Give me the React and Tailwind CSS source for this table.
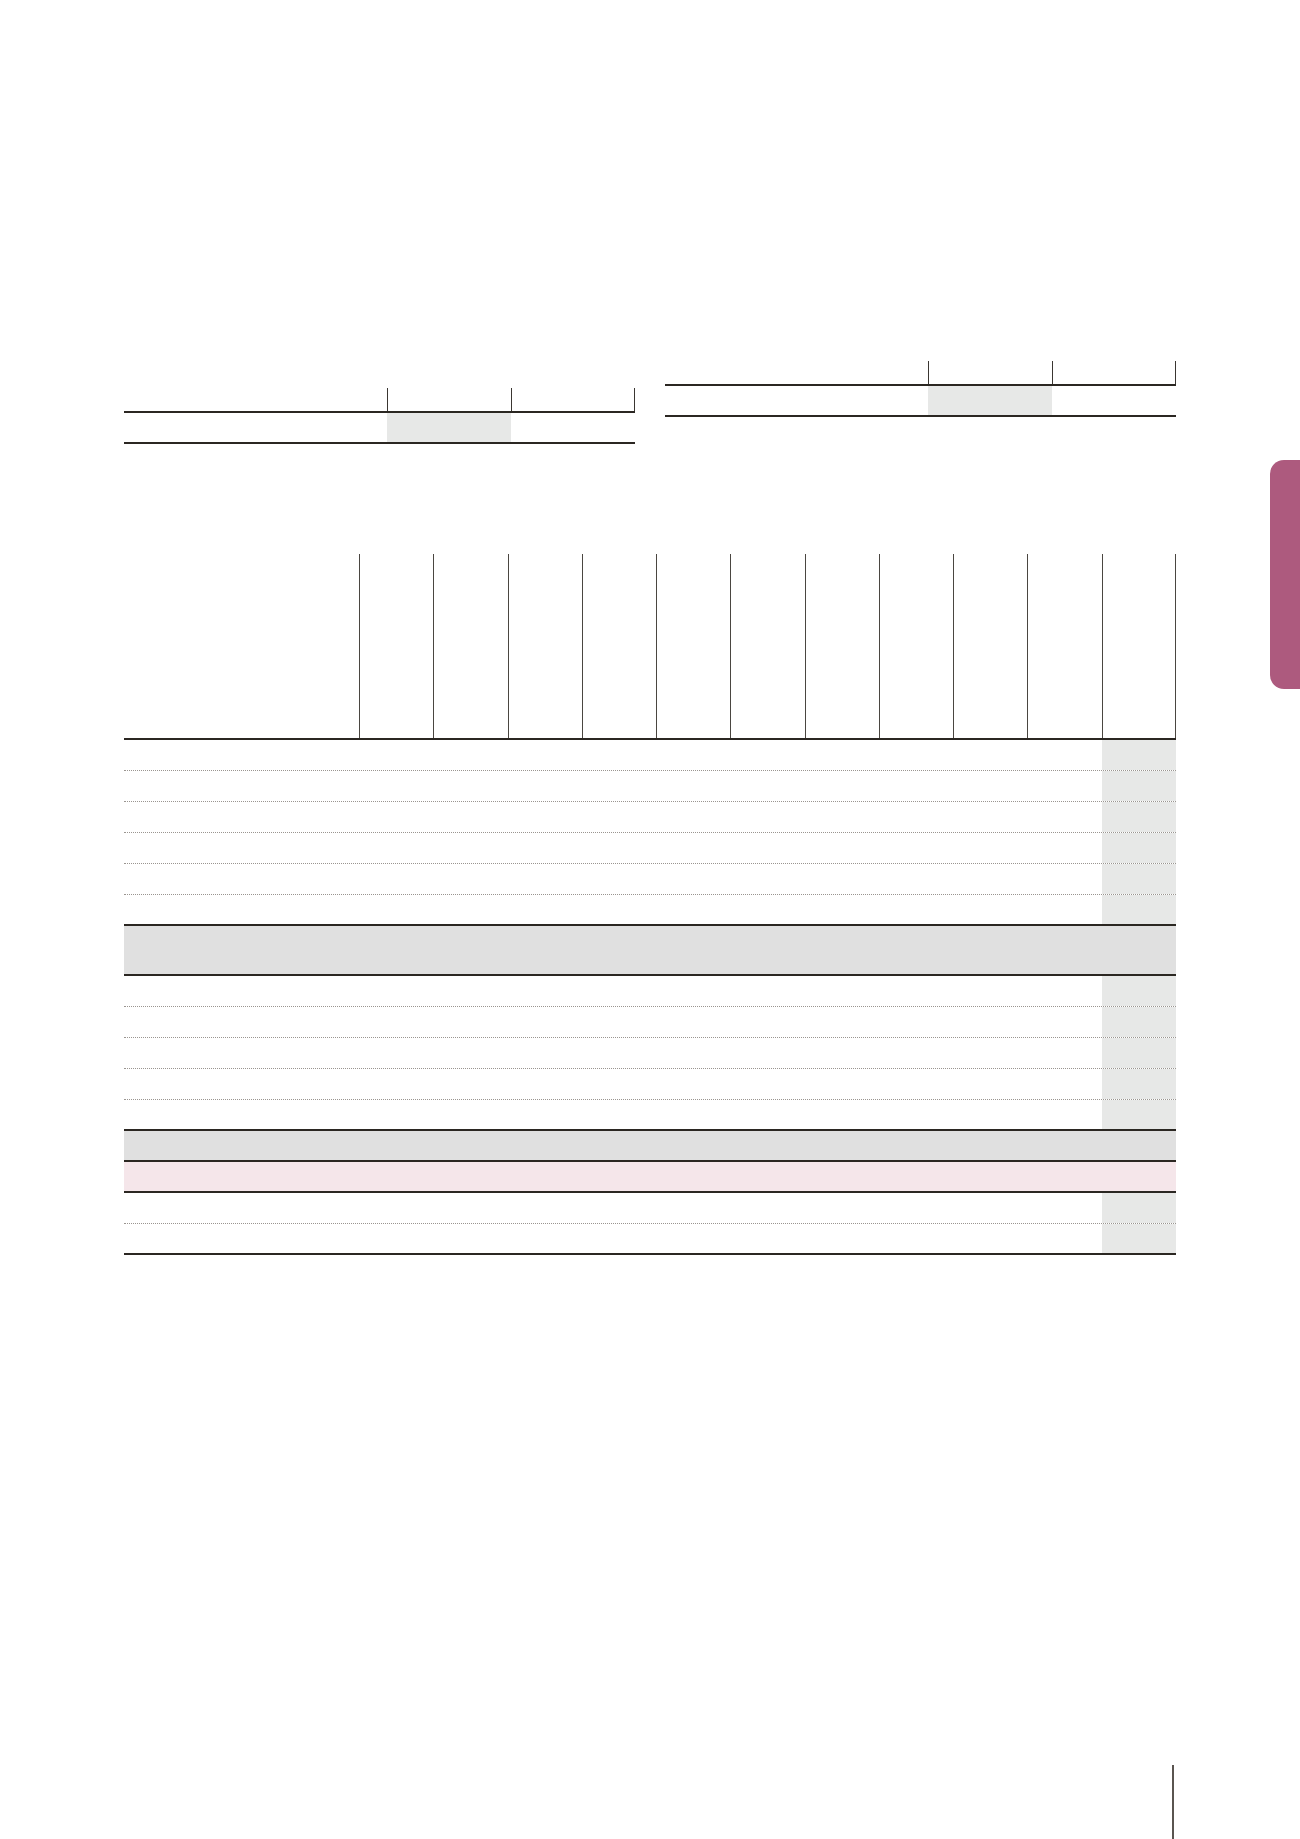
import React from "react";

const dark = "border-[#2b2722]";
const cols = Array.from({ length: 11 });

const SmallTable = ({ className }) => {
  return (
    <div className={"w-[511px] " + className}>
      <div className="grid grid-cols-[263px_124px_124px] h-[23px]">
        <div />
        <div className="border-l border-[#3a3631]" />
        <div className="border-l border-r border-[#3a3631]" />
      </div>
      <div className={"grid grid-cols-[263px_124px_124px] h-[33px] border-t-2 border-b-2 " + dark}>
        <div />
        <div className="bg-[#e7e8e7]" />
        <div />
      </div>
    </div>
  );
};

const Row = ({ last, tall, fill }) => {
  const border = last ? "border-b-2 " + dark : "border-b border-dotted border-[#9a9590]";
  if (fill) {
    return <div className={(tall ? "h-[50px] " : "h-[31px] ") + fill + " border-b-2 " + dark} />;
  }
  return (
    <div className={"grid grid-cols-[235px_repeat(11,1fr)] h-[31px] " + border}>
      <div className="col-span-11" />
      <div className="bg-[#e7e8e7]" />
    </div>
  );
};

const App = () => {
  return (
    <div className="relative w-[1300px] h-[1839px] bg-white overflow-hidden font-['Liberation_Sans',sans-serif]">
      <div className="pl-[124px] pt-[361px]">
        <div className="flex items-start gap-[30px]">
          <SmallTable className="mt-[27px]" />
          <SmallTable className="" />
        </div>

        <div className="w-[1052px] mt-[110px]">
          <div className={"grid grid-cols-[235px_repeat(11,1fr)] h-[186px] border-b-2 " + dark}>
            <div />
            {cols.map((_, i) => (
              <div
                key={i}
                className={
                  "border-l border-[#4a4641]" + (i === 10 ? " border-r" : "")
                }
              />
            ))}
          </div>
          <Row />
          <Row />
          <Row />
          <Row />
          <Row />
          <Row last />
          <Row fill="bg-[#e0e0e0]" tall />
          <Row />
          <Row />
          <Row />
          <Row />
          <Row last />
          <Row fill="bg-[#e0e0e0]" />
          <Row fill="bg-[#f5e6ea]" />
          <Row />
          <Row last />
        </div>
      </div>

      <div className="absolute left-[1270px] top-[460px] w-[30px] h-[229px] rounded-l-[14px] bg-[#ad5a7e]" />
      <div className="absolute left-[1172px] top-[1765px] w-[2px] h-[74px] bg-[#5a5550]" />
    </div>
  );
};

export default App;
